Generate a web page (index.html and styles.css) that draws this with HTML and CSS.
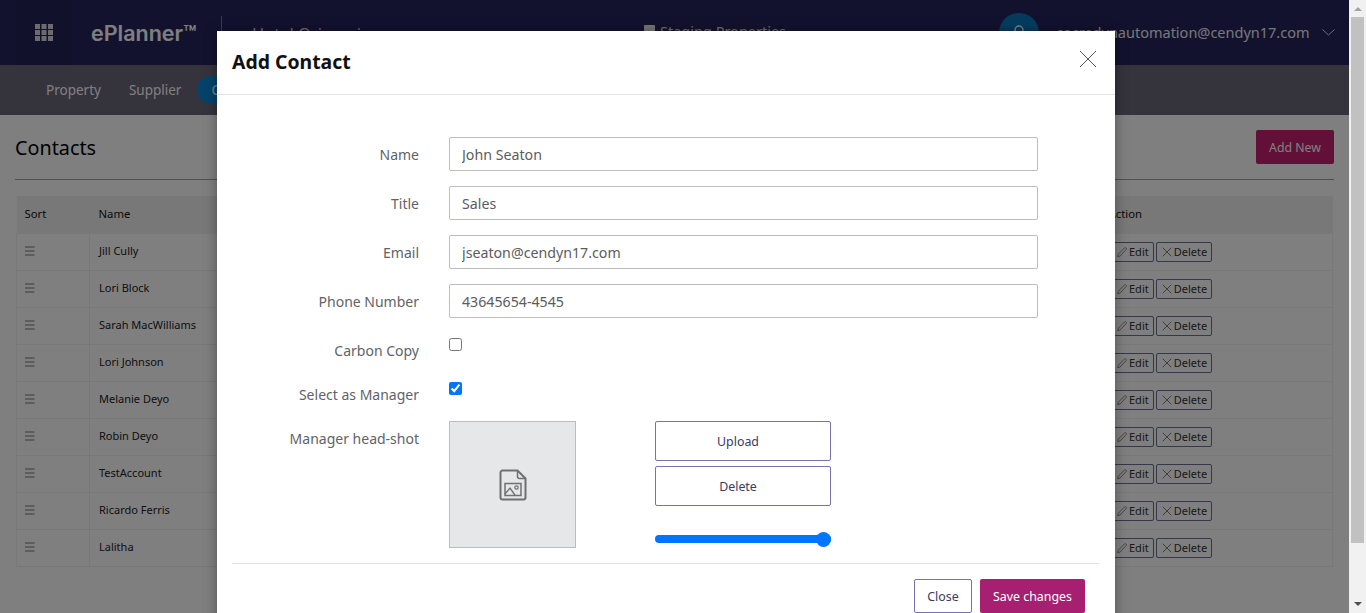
FILE: index.html
```html
<!DOCTYPE html>
<html>
<head>
  <title>ePlanner - Contacts</title>
  <link rel="stylesheet" href="styles.css">
</head>
<body>
  <svg class="defs" width="0" height="0">
    <symbol id="pen" viewBox="0 0 14 14"><path d="M2 12.5l.8-3L10 2.2a1.1 1.1 0 0 1 1.6 0l.3.3a1.1 1.1 0 0 1 0 1.6L4.8 11.600z" fill="none" stroke="currentColor" stroke-width="1"/></symbol>
    <symbol id="cross" viewBox="0 0 14 14"><path d="M2 2l10 10M12 2L2 12" fill="none" stroke="currentColor" stroke-width="1.100"/></symbol>
    <symbol id="bars" viewBox="0 0 10 10"><path d="M0 1h9.500M0 5h9.500M0 9h9.500" fill="none" stroke="currentColor" stroke-width="1"/></symbol>
  </svg>

  <div class="shell">
    <div class="page">
      <header class="topbar">
        <div class="waffle">
          <svg width="18" height="17" viewBox="0 0 18 17"><path fill="currentColor" d="M0 0h5v5H0zM6.500 0h5v5h-5zM13 0h5v5h-5zM0 6h5v5H0zM6.500 6h5v5h-5zM13 6h5v5h-5zM0 12h5v5H0zM6.500 12h5v5h-5zM13 12h5v5h-5z"/></svg>
        </div>
        <div class="brand">ePlanner™</div>
        <div class="hotel">Hotel Origami</div>
        <div class="staging"><span class="staging-arrows">‹ ›</span><span class="staging-box"></span>Staging Properties</div>
        <div class="user">
          <span class="avatar">
            <svg width="12" height="22" viewBox="0 0 12 22"><circle cx="6" cy="5" r="4" fill="none" stroke="#fff" stroke-width="1.500"/></svg>
          </span>
          <span class="email">cocredynautomation@cendyn17.com</span>
          <svg class="chev" width="13" height="7" viewBox="0 0 13 7"><path d="M.5.5l6 5.500 6-5.500" fill="none" stroke="currentColor"/></svg>
        </div>
      </header>

      <nav class="subnav">
        <a>Property</a>
        <a>Supplier</a>
        <a class="active">Contacts</a>
      </nav>

      <main class="content">
        <div class="content-head">
          <h1>Contacts</h1>
          <button class="add-new">Add New</button>
        </div>
        <table class="contacts">
          <thead>
            <tr><th class="c-sort">Sort</th><th>Name</th><th class="c-action">Action</th></tr>
          </thead>
          <tbody>
            <tr><td><svg class="bars"><use href="#bars"/></svg></td><td>Jill Cully</td><td><span class="act"><svg><use href="#pen"/></svg>Edit</span><span class="act"><svg><use href="#cross"/></svg>Delete</span></td></tr>
            <tr><td><svg class="bars"><use href="#bars"/></svg></td><td>Lori Block</td><td><span class="act"><svg><use href="#pen"/></svg>Edit</span><span class="act"><svg><use href="#cross"/></svg>Delete</span></td></tr>
            <tr><td><svg class="bars"><use href="#bars"/></svg></td><td>Sarah MacWilliams</td><td><span class="act"><svg><use href="#pen"/></svg>Edit</span><span class="act"><svg><use href="#cross"/></svg>Delete</span></td></tr>
            <tr><td><svg class="bars"><use href="#bars"/></svg></td><td>Lori Johnson</td><td><span class="act"><svg><use href="#pen"/></svg>Edit</span><span class="act"><svg><use href="#cross"/></svg>Delete</span></td></tr>
            <tr><td><svg class="bars"><use href="#bars"/></svg></td><td>Melanie Deyo</td><td><span class="act"><svg><use href="#pen"/></svg>Edit</span><span class="act"><svg><use href="#cross"/></svg>Delete</span></td></tr>
            <tr><td><svg class="bars"><use href="#bars"/></svg></td><td>Robin Deyo</td><td><span class="act"><svg><use href="#pen"/></svg>Edit</span><span class="act"><svg><use href="#cross"/></svg>Delete</span></td></tr>
            <tr><td><svg class="bars"><use href="#bars"/></svg></td><td>TestAccount</td><td><span class="act"><svg><use href="#pen"/></svg>Edit</span><span class="act"><svg><use href="#cross"/></svg>Delete</span></td></tr>
            <tr><td><svg class="bars"><use href="#bars"/></svg></td><td>Ricardo Ferris</td><td><span class="act"><svg><use href="#pen"/></svg>Edit</span><span class="act"><svg><use href="#cross"/></svg>Delete</span></td></tr>
            <tr><td><svg class="bars"><use href="#bars"/></svg></td><td>Lalitha</td><td><span class="act"><svg><use href="#pen"/></svg>Edit</span><span class="act"><svg><use href="#cross"/></svg>Delete</span></td></tr>
          </tbody>
        </table>
      </main>

      <div class="backdrop">
        <div class="modal">
          <div class="modal-head">
            <h2>Add Contact</h2>
            <svg class="modal-x" width="18" height="18" viewBox="0 0 18 18"><path d="M1 1l16 16M17 1L1 17" fill="none" stroke="#555" stroke-width="1"/></svg>
          </div>
          <form class="modal-body">
            <div class="row">
              <label>Name</label>
              <input type="text" value="John Seaton">
            </div>
            <div class="row">
              <label>Title</label>
              <input type="text" value="Sales">
            </div>
            <div class="row">
              <label>Email</label>
              <input type="text" value="jseaton@cendyn17.com">
            </div>
            <div class="row">
              <label>Phone Number</label>
              <input type="text" value="43645654-4545">
            </div>
            <div class="row row-check">
              <label>Carbon Copy</label>
              <input type="checkbox">
            </div>
            <div class="row row-check">
              <label>Select as Manager</label>
              <input type="checkbox" checked>
            </div>
            <div class="row row-photo">
              <label>Manager head-shot</label>
              <div class="photo">
                <svg width="28" height="32" viewBox="0 0 28 32" fill="none" stroke="#6f7072">
                  <path d="M3.500 1.500h15l8 8v19a2 2 0 0 1-2 2h-21a2 2 0 0 1-2-2v-25a2 2 0 0 1 2-2z" stroke-width="2"/>
                  <path d="M18.500 1.500v6a2 2 0 0 0 2 2h6" stroke-width="1.500"/>
                  <rect x="6" y="14.500" width="16" height="12" stroke-width="1.500"/>
                  <circle cx="17.500" cy="18.500" r="1.700" stroke-width="1.200"/>
                  <path d="M6 25l5-6 5 7" stroke-width="1.300"/>
                </svg>
              </div>
              <div class="photo-tools">
                <button type="button" class="btn-line tall">Upload</button>
                <button type="button" class="btn-line tall">Delete</button>
                <input type="range" class="zoom-range" min="0" max="100" value="100">
              </div>
            </div>
          </form>
          <div class="modal-foot">
            <button class="btn-line btn-close">Close</button>
            <button class="btn-save">Save changes</button>
          </div>
        </div>
      </div>
    </div>

    <div class="scrollbar">
      <span class="arrow up"></span>
      <span class="thumb"></span>
      <span class="arrow down"></span>
    </div>
  </div>
</body>
</html>
```

FILE: styles.css
```css
html, body {
  margin: 0;
  height: 613px;
  overflow: hidden;
}

body {
  font-family: "Noto Sans", "Open Sans", sans-serif;
  color: #212529;
  background: #fff;
}

.defs {
  position: absolute;
}

.shell {
  display: flex;
  height: 613px;
}

.page {
  position: relative;
  flex: 1;
  min-width: 0;
  overflow: hidden;
}

/* top bar */
.topbar {
  display: flex;
  align-items: center;
  height: 65px;
  background: #24245e;
  color: #fff;
}

.waffle {
  display: flex;
  align-items: center;
  justify-content: center;
  width: 58px;
  height: 65px;
  margin-left: 15px;
  background: #222259;
  color: #d8d8de;
}

.brand {
  width: 130px;
  margin-left: 18px;
  font-family: Inter, sans-serif;
  font-size: 21.500px;
  font-weight: 600;
  color: #fff;
  white-space: nowrap;
}

.hotel {
  width: 399px;
  height: 33px;
  margin-top: -1px;
  padding: 6px 0 0 30px;
  box-sizing: border-box;
  border-left: 1px solid #77779a;
  font-size: 16.500px;
  color: #ddd;
}

.staging {
  display: flex;
  align-items: center;
  width: 380px;
  margin: -4px 0 0 -1px;
  font-size: 14.500px;
  color: #ddd;
}

.staging-arrows {
  width: 25px;
  margin-top: 3px;
  font-size: 12px;
}

.staging-box {
  width: 11px;
  height: 12px;
  margin-right: 5px;
  background: #eee;
  border-radius: 1px;
}

.user {
  display: flex;
  align-items: center;
}

.avatar {
  display: flex;
  justify-content: center;
  width: 40px;
  height: 40px;
  padding-top: 12px;
  box-sizing: border-box;
  border-radius: 50%;
  background: #0a78bd;
}

.email {
  width: 254px;
  margin: -2px 0 0 17px;
  font-size: 14.500px;
  white-space: nowrap;
  color: #eee;
}

.chev {
  margin-left: 12px;
  color: #ddd;
}

/* sub nav */
.subnav {
  display: flex;
  align-items: center;
  gap: 28px;
  height: 50px;
  padding-left: 46px;
  background: #6b6676;
  font-size: 13.500px;
  color: #fff;
}

.subnav a.active {
  margin-left: -12px;
  padding: 5px 14px;
  border-radius: 16px;
  background: #0a86d6;
}

/* list */
.content {
  padding: 15px 15px 0;
}

.content-head {
  display: flex;
  align-items: center;
  justify-content: space-between;
  height: 49px;
  border-bottom: 1px solid #a0a0a0;
}

.content-head h1 {
  margin: 0 0 14px;
  font-size: 19.800px;
  font-weight: 400;
  color: #000;
}

.add-new {
  width: 78px;
  height: 34px;
  margin: 0 0 15px;
  padding: 0;
  border: 0;
  border-radius: 2px;
  background: #c4206e;
  color: #fff;
  font-family: inherit;
  font-size: 12.300px;
}

.contacts {
  width: 1317px;
  margin: 16px 0 0 1px;
  border-collapse: collapse;
  table-layout: fixed;
  font-size: 11px;
}

.contacts th {
  height: 37px;
  padding: 0 9px 2px;
  box-sizing: border-box;
  background: #f1f1f1;
  font-size: 11.300px;
  font-weight: 400;
  text-align: left;
  color: #111;
}

.contacts th.c-sort {
  padding-left: 8px;
}

.contacts td {
  height: 37px;
  padding: 0 9px 2px;
  box-sizing: border-box;
  border: 1px solid #f1f1f1;
  color: #222;
  white-space: nowrap;
}

.contacts td:first-child {
  padding-left: 8px;
}

.contacts td:last-child {
  padding: 0 0 0 11px;
}

.c-sort {
  width: 73px;
}

.c-action {
  width: 233px;
}

.bars {
  display: block;
  width: 10px;
  height: 10px;
  color: #777;
}

.act {
  display: inline-flex;
  align-items: center;
  height: 18px;
  margin-right: 2px;
  padding: 0 4px;
  border: 1px solid #6c6c9a;
  border-radius: 2px;
  color: #333;
}

.act svg {
  width: 12px;
  height: 12px;
  margin-right: 1px;
  color: #777;
}

/* dialog over the page */
.backdrop {
  position: absolute;
  inset: 0;
  background: rgba(0, 0, 0, .5);
}

.modal {
  width: 898px;
  margin: 31px 0 0 217px;
  background: #fff;
  box-shadow: 0 0 12px rgba(0, 0, 0, .35);
}

.modal-head {
  display: flex;
  align-items: center;
  justify-content: space-between;
  height: 63px;
  padding: 0 18px 0 15px;
  border-bottom: 1px solid #e3e3e3;
}

.modal-head h2 {
  margin: -2px 0 0;
  font-size: 19.400px;
  font-weight: 700;
  color: #111;
}

.modal-x {
  margin-top: -7px;
}

.modal-body {
  margin: 0 16px 0 15px;
  padding-top: 42px;
  border-bottom: 1px solid #e3e3e3;
}

.row {
  display: flex;
  align-items: flex-start;
  margin-bottom: 15px;
  font-size: 14px;
  color: #5f6368;
}

.row label {
  flex: none;
  width: 187px;
  height: 34px;
  margin-right: 30px;
  line-height: 36px;
  text-align: right;
}

.row input[type="text"] {
  width: 589px;
  height: 34px;
  padding: 0 12px;
  box-sizing: border-box;
  border: 1px solid #bdbdbd;
  border-radius: 2px;
  font-family: inherit;
  font-size: 14.200px;
  color: #5c5c5c;
}

.row-check {
  height: 29px;
}

.row-check input {
  width: 13px;
  height: 13px;
  margin: 5px 0 0;
}

.row-photo {
  height: 127px;
}

.photo {
  display: flex;
  align-items: center;
  justify-content: center;
  width: 127px;
  height: 127px;
  box-sizing: border-box;
  border: 1px solid #bcbcbc;
  background: #e6e7e9;
}

.photo-tools {
  display: flex;
  flex-direction: column;
  gap: 5px;
  width: 176px;
  margin-left: 79px;
}

.btn-line {
  height: 34px;
  padding: 0 14px;
  border: 1px solid #7a6fb0;
  border-radius: 2px;
  background: #fff;
  color: #3c3a60;
  font-family: inherit;
  font-size: 12.400px;
}

.btn-line.tall {
  height: 40px;
  padding: 0 24px 0 14px;
}

.btn-close {
  width: 58px;
  padding: 0;
}

.zoom-range {
  -webkit-appearance: none;
  appearance: none;
  width: 176px;
  height: 8px;
  margin: 24px 0 0;
  border-radius: 4px;
  background: #0075ff;
}

.zoom-range::-webkit-slider-thumb {
  -webkit-appearance: none;
  width: 15px;
  height: 15px;
  border-radius: 50%;
  background: #0075ff;
}

.modal-foot {
  display: flex;
  justify-content: flex-end;
  gap: 8px;
  padding: 15px 30px;
}

.btn-save {
  width: 105px;
  height: 34px;
  border: 0;
  border-radius: 2px;
  background: #a61f70;
  color: #fff;
  font-family: inherit;
  font-size: 12.400px;
}

/* window scrollbar */
.scrollbar {
  position: relative;
  flex: none;
  width: 17px;
  background: #f1f1f1;
}

.thumb {
  position: absolute;
  top: 17px;
  left: 2px;
  width: 13px;
  height: 526px;
  background: #c1c1c1;
}

.arrow {
  position: absolute;
  left: 5px;
  border-left: 4px solid transparent;
  border-right: 4px solid transparent;
}

.arrow.up {
  top: 7px;
  border-bottom: 4px solid #a3a3a3;
}

.arrow.down {
  bottom: 7px;
  border-top: 4px solid #505050;
}
```
